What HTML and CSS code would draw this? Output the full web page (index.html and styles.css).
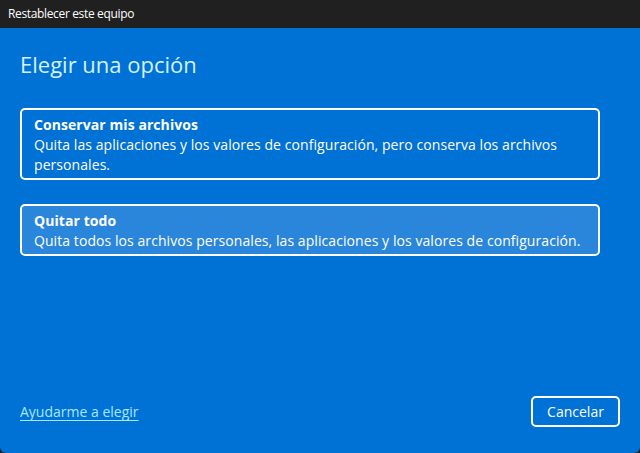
FILE: index.html
```html
<!DOCTYPE html>
<html lang="es">
<head>
<meta charset="utf-8">
<title>Restablecer este equipo</title>
<link rel="stylesheet" href="styles.css">
</head>
<body>
<div class="window">
  <div class="titlebar">Restablecer este equipo</div>
  <div class="content">
    <h1 class="heading">Elegir una opción</h1>
    <div class="options">
      <div class="option">
        <div class="option-title">Conservar mis archivos</div>
        <div class="option-desc">Quita las aplicaciones y los valores de configuración, pero conserva los archivos personales.</div>
      </div>
      <div class="option option-hover">
        <div class="option-title">Quitar todo</div>
        <div class="option-desc">Quita todos los archivos personales, las aplicaciones y los valores de configuración.</div>
      </div>
    </div>
    <div class="footer">
      <a class="help-link" href="#">Ayudarme a elegir</a>
      <button class="cancel">Cancelar</button>
    </div>
  </div>
</div>
</body>
</html>
```
FILE: styles.css
```css
html, body {
  margin: 0;
  padding: 0;
  width: 640px;
  height: 453px;
  overflow: hidden;
  background: #202020;
}
body {
  font-family: "Segoe UI", "Open Sans", "Noto Sans", sans-serif;
  color: #ffffff;
}
.window {
  display: flex;
  flex-direction: column;
  width: 640px;
  height: 453px;
}
.titlebar {
  height: 28px;
  background: #202020;
  color: #ffffff;
  font-size: 12px;
  line-height: 28px;
  padding-left: 8px;
  letter-spacing: -0.35px;
}
.content {
  flex: 1;
  background: #0071d5;
  display: flex;
  flex-direction: column;
  padding: 0 20px 26px 20px;
  border-radius: 0 0 6px 6px;
}
.heading {
  margin: 0;
  padding-top: 22px;
  font-weight: 400;
  font-size: 22px;
  line-height: 28px;
  color: #d6f2ff;
}
.options {
  display: flex;
  flex-direction: column;
  gap: 24px;
  margin-top: 30px;
  width: 580px;
}
.option {
  border: 2px solid #ffffff;
  border-radius: 5px;
  padding: 5px 12px 3px 12px;
  font-size: 14px;
  line-height: 20px;
  letter-spacing: 0.07px;
}
.option-hover {
  background: #2a86da;
}
.option-title {
  font-weight: 700;
}
.option-desc {
  font-weight: 400;
}
.footer {
  margin-top: auto;
  display: flex;
  justify-content: space-between;
  align-items: center;
}
.help-link {
  color: #a8e8ff;
  font-size: 14px;
  text-decoration: underline;
  text-underline-offset: 3px;
}
.cancel {
  font-family: inherit;
  width: 89px;
  height: 31px;
  background: transparent;
  color: #ffffff;
  border: 2px solid #ffffff;
  border-radius: 5px;
  font-size: 14px;
  padding: 0;
}
```
